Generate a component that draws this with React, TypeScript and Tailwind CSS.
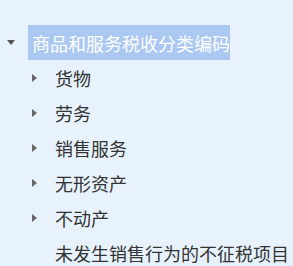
import React from 'react';

const children = [
  { label: '货物', leaf: false },
  { label: '劳务', leaf: false },
  { label: '销售服务', leaf: false },
  { label: '无形资产', leaf: false },
  { label: '不动产', leaf: false },
  { label: '未发生销售行为的不征税项目', leaf: true },
];

const App: React.FC = () => {
  return (
    <div
      className="w-[293px] h-[266px] overflow-hidden bg-[#e7f2fc] pt-[25px] text-[18px] leading-none text-[#333]"
      style={{ fontFamily: '"Noto Sans CJK SC", "Noto Sans", sans-serif' }}
    >
      {/* root node */}
      <div className="flex items-center h-[35px]">
        <div className="w-[28px] flex items-center">
          <svg className="ml-[7px] w-[8px] h-[5px]" viewBox="0 0 8 5">
            <path d="M0 0h8L4 5z" fill="#555" />
          </svg>
        </div>
        <div className="h-[35px] flex items-center pl-[4px] bg-[#aac8f2] text-white whitespace-nowrap">
          商品和服务税收分类编码
        </div>
      </div>

      {/* child nodes */}
      {children.map((c) => (
        <div key={c.label} className="flex items-center h-[35px] pl-[32px] whitespace-nowrap">
          <div className="w-[5px] flex items-center">
            {!c.leaf && (
              <svg className="w-[5px] h-[8px]" viewBox="0 0 5 8">
                <path d="M0 0l5 4-5 4z" fill="#666" />
              </svg>
            )}
          </div>
          <span className="ml-[18px]">{c.label}</span>
        </div>
      ))}
    </div>
  );
};

export default App;
